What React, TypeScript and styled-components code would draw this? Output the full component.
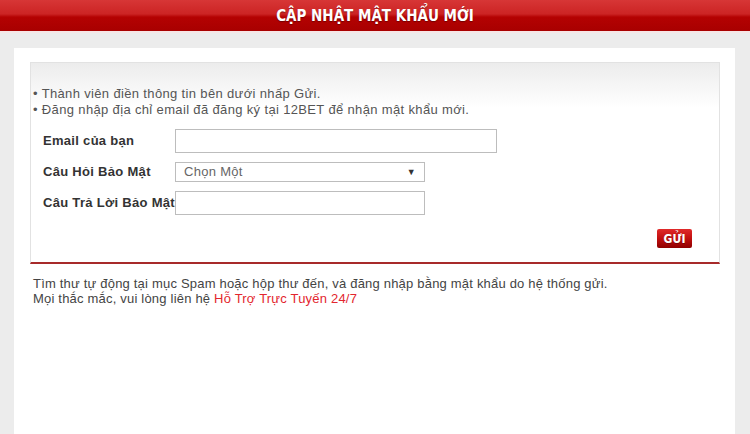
import React from 'react';
import styled, { createGlobalStyle } from 'styled-components';

const GlobalStyle = createGlobalStyle`
  html, body {
    margin: 0;
    padding: 0;
    background: #ececec;
    font-family: "Liberation Sans", Arial, sans-serif;
  }
`;

const Header = styled.div`
  height: 31px;
  display: flex;
  align-items: center;
  justify-content: center;
  background: linear-gradient(#d73636 0%, #cc2424 45%, #b40202 55%, #a80000 100%);
  border-bottom: 2px solid #f6e6e6;
`;

const Title = styled.h1`
  margin: 0;
  font-family: "Liberation Sans Narrow", "DejaVu Sans Condensed", sans-serif;
  font-stretch: condensed;
  font-size: 15px;
  font-weight: bold;
  color: #fff;
  text-shadow: 0 1px 1px rgba(0, 0, 0, 0.35);
`;

const Panel = styled.div`
  margin: 15px 15px 0 14px;
  padding: 14px 15px 0 16px;
  background: #fff;
  min-height: calc(100vh - 62px);
`;

const FormBox = styled.div`
  border: 1px solid #e2e2e2;
  border-bottom: 2px solid #a72a2a;
  background: linear-gradient(#ececec 0px, #fff 45px);
  padding: 23px 27px 14px 2px;
`;

const Notes = styled.div`
  font-size: 13px;
  line-height: 16px;
  letter-spacing: 0.35px;
  color: #555;
`;

const Fields = styled.div`
  margin-top: 7px;
  padding-left: 10px;
  display: grid;
  grid-template-columns: 132px 1fr;
  grid-auto-rows: 31px;
  align-items: center;
`;

const Label = styled.label`
  font-size: 13px;
  font-weight: bold;
  letter-spacing: 0.3px;
  color: #333;
  white-space: nowrap;
`;

const TextInput = styled.input<{ $width: number }>`
  box-sizing: border-box;
  width: ${p => p.$width}px;
  height: 24px;
  border: 1px solid #bdbdbd;
  background: #fff;
  padding: 2px 6px;
  font-family: inherit;
  font-size: 13px;
  outline: none;
`;

const SelectBox = styled.div`
  box-sizing: border-box;
  width: 250px;
  height: 20px;
  border: 1px solid #bdbdbd;
  display: flex;
  align-items: center;
  justify-content: space-between;
  padding: 0 8px;
  font-size: 13px;
  letter-spacing: 0.3px;
  color: #666;
`;

const Arrow = styled.span`
  font-size: 9px;
  color: #333;
`;

const Actions = styled.div`
  display: flex;
  justify-content: flex-end;
  margin-top: 11px;
`;

const SendButton = styled.button`
  width: 35px;
  height: 19px;
  padding: 0;
  border: none;
  border-radius: 2px;
  background: linear-gradient(#e02a2a 0%, #c10f0f 50%, #8f0000 100%);
  color: #fff;
  font-family: "Liberation Sans Narrow", "DejaVu Sans Condensed", sans-serif;
  font-size: 12px;
  font-weight: bold;
  text-shadow: 0 1px 0 rgba(0, 0, 0, 0.3);
`;

const Footer = styled.div`
  margin-top: 12px;
  padding-left: 3px;
  font-size: 13px;
  line-height: 15px;
  letter-spacing: 0.2px;
  color: #444;
`;

const Link = styled.a`
  color: #e3262e;
  text-decoration: none;
`;

const App: React.FC = () => {
  return (
    <>
      <GlobalStyle />
      <Header>
        <Title>CẬP NHẬT MẬT KHẨU MỚI</Title>
      </Header>
      <Panel>
        <FormBox>
          <Notes>
            <div>• Thành viên điền thông tin bên dưới nhấp Gửi.</div>
            <div>• Đăng nhập địa chỉ email đã đăng ký tại 12BET để nhận mật khẩu mới.</div>
          </Notes>
          <Fields>
            <Label>Email của bạn</Label>
            <TextInput $width={322} />
            <Label>Câu Hỏi Bảo Mật</Label>
            <SelectBox>
              <span>Chọn Một</span>
              <Arrow>▼</Arrow>
            </SelectBox>
            <Label>Câu Trả Lời Bảo Mật</Label>
            <TextInput $width={250} />
          </Fields>
          <Actions>
            <SendButton>GỬI</SendButton>
          </Actions>
        </FormBox>
        <Footer>
          <div>Tìm thư tự động tại mục Spam hoặc hộp thư đến, và đăng nhập bằng mật khẩu do hệ thống gửi.</div>
          <div>Mọi thắc mắc, vui lòng liên hệ <Link href="#">Hỗ Trợ Trực Tuyến 24/7</Link></div>
        </Footer>
      </Panel>
    </>
  );
};

export default App;
